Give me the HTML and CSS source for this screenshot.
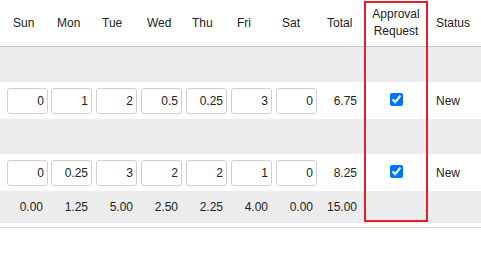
FILE: index.html
```html
<!DOCTYPE html>
<html lang="en">
<head>
    <meta charset="UTF-8">
    <meta name="viewport" content="width=device-width, initial-scale=1.0">
    <title>Timesheet</title>
    <link rel="stylesheet" href="styles.css">
</head>
<body>

<!-- Weekly timesheet -->
<div class="sheet">
    <table class="timesheet">
        <colgroup>
            <col class="col-first">
            <col class="col-day">
            <col class="col-day">
            <col class="col-day">
            <col class="col-day">
            <col class="col-day">
            <col class="col-day">
            <col class="col-total">
            <col class="col-approval">
            <col class="col-status">
        </colgroup>
        <thead>
            <tr>
                <th>Sun</th>
                <th>Mon</th>
                <th>Tue</th>
                <th>Wed</th>
                <th>Thu</th>
                <th>Fri</th>
                <th>Sat</th>
                <th>Total</th>
                <th class="approval">Approval<br>Request</th>
                <th>Status</th>
            </tr>
        </thead>
        <tbody>
            <tr class="group">
                <td colspan="10"></td>
            </tr>
            <tr class="entry">
                <td><input class="hours" type="text" value="0"></td>
                <td><input class="hours" type="text" value="1"></td>
                <td><input class="hours" type="text" value="2"></td>
                <td><input class="hours" type="text" value="0.5"></td>
                <td><input class="hours" type="text" value="0.25"></td>
                <td><input class="hours" type="text" value="3"></td>
                <td><input class="hours" type="text" value="0"></td>
                <td class="total">6.75</td>
                <td class="approval"><input type="checkbox" checked></td>
                <td class="status">New</td>
            </tr>
            <tr class="group">
                <td colspan="10"></td>
            </tr>
            <tr class="entry">
                <td><input class="hours" type="text" value="0"></td>
                <td><input class="hours" type="text" value="0.25"></td>
                <td><input class="hours" type="text" value="3"></td>
                <td><input class="hours" type="text" value="2"></td>
                <td><input class="hours" type="text" value="2"></td>
                <td><input class="hours" type="text" value="1"></td>
                <td><input class="hours" type="text" value="0"></td>
                <td class="total">8.25</td>
                <td class="approval"><input type="checkbox" checked></td>
                <td class="status">New</td>
            </tr>
            <tr class="sums">
                <td>0.00</td>
                <td>1.25</td>
                <td>5.00</td>
                <td>2.50</td>
                <td>2.25</td>
                <td>4.00</td>
                <td>0.00</td>
                <td>15.00</td>
                <td></td>
                <td></td>
            </tr>
        </tbody>
        <tfoot>
            <tr class="end">
                <td colspan="10"></td>
            </tr>
        </tfoot>
    </table>

    <!-- highlight round the approval column -->
    <div class="highlight"></div>
</div>

</body>
</html>
```

FILE: styles.css
```css
body {
    font-family: "Liberation Sans", Arial, sans-serif;
    font-size: 12px;
    color: #222;
    margin: 0;
    background-color: #fff;
}

.sheet {
    position: relative;
    width: 481px;
}

.timesheet {
    width: 100%;
    border-collapse: collapse;
    table-layout: fixed;
}

.col-first {
    width: 49px;
}

.col-day {
    width: 45px;
}

.col-total {
    width: 45px;
}

.col-approval {
    width: 64px;
}

.timesheet th {
    height: 46px;
    padding: 0 0 0 8px;
    text-align: left;
    font-weight: normal;
    line-height: 17px;
    vertical-align: middle;
    border-bottom: 1px solid #c4c4c4;
}

.timesheet th:first-child {
    padding-left: 13px;
}

.timesheet th.approval {
    padding: 0;
    text-align: center;
}

.timesheet td {
    padding: 0;
    vertical-align: middle;
}

.group td {
    height: 35px;
    background-color: #ececec;
}

.entry td {
    height: 34px;
    padding-left: 2px;
}

.entry td:first-child {
    padding-left: 7px;
}

.hours {
    box-sizing: border-box;
    width: 41px;
    height: 26px;
    padding: 0 3px 0 0;
    border: 1px solid #cfcfcf;
    border-radius: 3px;
    font-family: inherit;
    font-size: 12px;
    color: #222;
    text-align: right;
    background-color: #fff;
}

.entry td.total {
    padding: 0 7px 0 0;
    text-align: right;
}

.entry td.approval {
    padding: 0 0 3px 0;
    text-align: center;
}

.approval input[type="checkbox"] {
    width: 13px;
    height: 13px;
    margin: 0;
    vertical-align: middle;
}

.entry td.status {
    padding-left: 8px;
}

.sums td {
    height: 32px;
    padding-right: 6px;
    text-align: right;
    background-color: #ececec;
}

.sums td:nth-child(8) {
    padding-right: 7px;
}

.end td {
    height: 4px;
    border-bottom: 1px solid #dcdcdc;
}

.highlight {
    position: absolute;
    left: 364px;
    top: 1px;
    width: 60px;
    height: 217px;
    border: 2px solid #e3202b;
}
```
